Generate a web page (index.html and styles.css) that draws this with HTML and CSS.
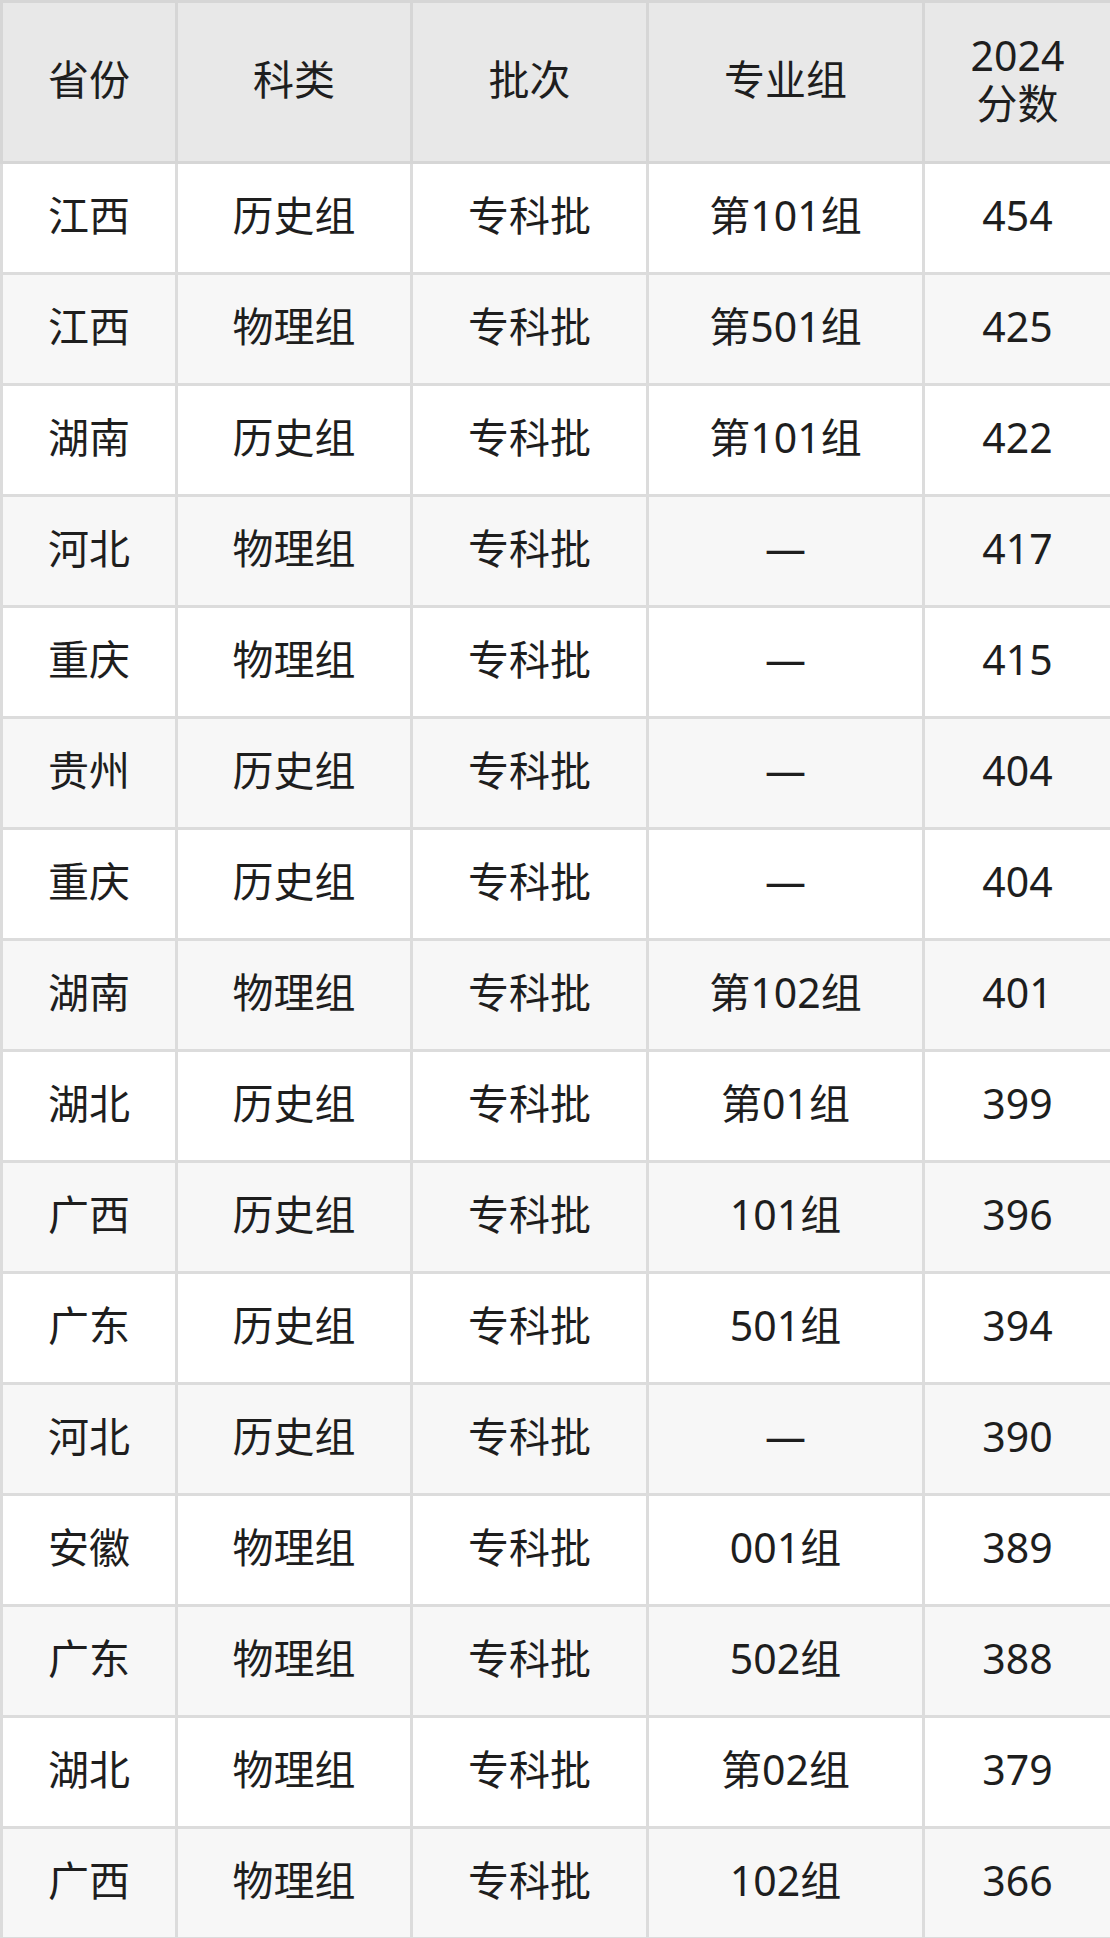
FILE: index.html
```html
<!DOCTYPE html>
<html lang="zh-CN">
<head>
<meta charset="utf-8">
<title>2024 专科批分数</title>
<link rel="stylesheet" href="styles.css">
</head>
<body>
<table class="score-table">
  <colgroup>
    <col class="c1"><col class="c2"><col class="c3"><col class="c4"><col class="c5">
  </colgroup>
  <thead>
    <tr><th>省份</th><th>科类</th><th>批次</th><th>专业组</th><th class="year">2024<br>分数</th></tr>
  </thead>
  <tbody>
    <tr><td>江西</td><td>历史组</td><td>专科批</td><td>第101组</td><td>454</td></tr>
    <tr><td>江西</td><td>物理组</td><td>专科批</td><td>第501组</td><td>425</td></tr>
    <tr><td>湖南</td><td>历史组</td><td>专科批</td><td>第101组</td><td>422</td></tr>
    <tr><td>河北</td><td>物理组</td><td>专科批</td><td>—</td><td>417</td></tr>
    <tr><td>重庆</td><td>物理组</td><td>专科批</td><td>—</td><td>415</td></tr>
    <tr><td>贵州</td><td>历史组</td><td>专科批</td><td>—</td><td>404</td></tr>
    <tr><td>重庆</td><td>历史组</td><td>专科批</td><td>—</td><td>404</td></tr>
    <tr><td>湖南</td><td>物理组</td><td>专科批</td><td>第102组</td><td>401</td></tr>
    <tr><td>湖北</td><td>历史组</td><td>专科批</td><td>第01组</td><td>399</td></tr>
    <tr><td>广西</td><td>历史组</td><td>专科批</td><td>101组</td><td>396</td></tr>
    <tr><td>广东</td><td>历史组</td><td>专科批</td><td>501组</td><td>394</td></tr>
    <tr><td>河北</td><td>历史组</td><td>专科批</td><td>—</td><td>390</td></tr>
    <tr><td>安徽</td><td>物理组</td><td>专科批</td><td>001组</td><td>389</td></tr>
    <tr><td>广东</td><td>物理组</td><td>专科批</td><td>502组</td><td>388</td></tr>
    <tr><td>湖北</td><td>物理组</td><td>专科批</td><td>第02组</td><td>379</td></tr>
    <tr><td>广西</td><td>物理组</td><td>专科批</td><td>102组</td><td>366</td></tr>
  </tbody>
</table>
</body>
</html>
```

FILE: styles.css
```css
html, body {
  margin: 0;
  padding: 0;
  background: #ffffff;
}

body {
  width: 1110px;
  font-family: "Noto Sans", "Noto Sans CJK SC", sans-serif;
  color: #1e1e1e;
}

.score-table {
  width: 1110px;
  border-collapse: collapse;
  table-layout: fixed;
}

.c1 { width: 175px; }
.c2 { width: 235px; }
.c3 { width: 236px; }
.c4 { width: 276px; }
.c5 { width: 188px; }

.score-table th,
.score-table td {
  border: 3px solid #dcdcdc;
  text-align: center;
  vertical-align: middle;
  font-size: 41px;
  font-weight: 400;
  padding: 0 0 4px 0;
  line-height: 1.15;
}

.score-table th {
  background: #e8e8e8;
  height: 154px;
  border-color: #d6d6d6;
}

.score-table th.year {
  line-height: 1.16;
}

.score-table td {
  height: 104px;
}

.score-table tbody tr:nth-child(even) td {
  background: #f7f7f7;
}
```
